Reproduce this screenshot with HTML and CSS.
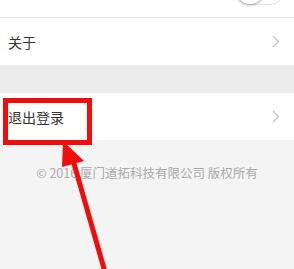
FILE: index.html
```html
<!DOCTYPE html>
<html>
<head>
<meta charset="utf-8">
<link rel="stylesheet" href="styles.css">
</head>
<body>
<div class="page">
  <div class="group">
    <div class="row row-top">
      <span class="label label-top">新消息提醒与推送</span>
      <span class="toggle"><span class="knob"></span></span>
    </div>
    <div class="row">
      <span class="label">关于</span>
      <svg class="chev" width="8" height="13" viewBox="0 0 8 13"><path d="M1 1 L6.5 6.5 L1 12" fill="none" stroke="#c7c7cc" stroke-width="1.4"/></svg>
    </div>
  </div>
  <div class="band"></div>
  <div class="group">
    <div class="row">
      <span class="label">退出登录</span>
      <svg class="chev" width="8" height="13" viewBox="0 0 8 13"><path d="M1 1 L6.5 6.5 L1 12" fill="none" stroke="#c7c7cc" stroke-width="1.4"/></svg>
    </div>
  </div>
  <div class="footer">© 2016 厦门道拓科技有限公司 版权所有</div>
</div>
<svg class="annot" width="294" height="269" viewBox="0 0 294 269">
  <rect x="5.5" y="100.5" width="84" height="42" fill="none" stroke="#f20d0d" stroke-width="5"/>
  <line x1="105" y1="272" x2="73" y2="160" stroke="#f20d0d" stroke-width="5"/>
  <polygon points="63,141 62,167 84,161" fill="#f20d0d"/>
</svg>
</body>
</html>
```
FILE: styles.css
```css
html, body {
  margin: 0;
  padding: 0;
  background: #f4f4f4;
  overflow: hidden;
}
body {
  width: 294px;
  height: 269px;
  position: relative;
  font-family: "Noto Sans CJK SC", "Liberation Sans", sans-serif;
}
.page {
  margin-top: -30px;
}
.group {
  background: #fff;
}
.row {
  height: 47px;
  display: flex;
  align-items: center;
  justify-content: space-between;
  padding: 0 14px 0 8px;
  font-size: 14px;
  color: #333;
}
.row-top {
  border-bottom: 1px solid #e8e8e8;
  padding-right: 9px;
}
.label {
  line-height: 1;
}
.label-top {
  margin-bottom: 3px;
}
.toggle {
  width: 50px;
  height: 30px;
  border-radius: 16px;
  border: 1px solid #e2e2e2;
  box-sizing: border-box;
  background: #fff;
  display: flex;
  align-items: center;
  margin-top: -7px;
}
.knob {
  width: 28px;
  height: 28px;
  border-radius: 50%;
  background: #fff;
  box-shadow: 0 1px 3px rgba(0,0,0,0.35);
}
.chev {
  display: block;
}
.band {
  height: 28px;
  background: #ececec;
}
.footer {
  margin-top: 25px;
  text-align: center;
  font-size: 12.5px;
  color: #aaaaaa;
  line-height: 16px;
}
.annot {
  position: absolute;
  left: 0;
  top: 0;
}
```
